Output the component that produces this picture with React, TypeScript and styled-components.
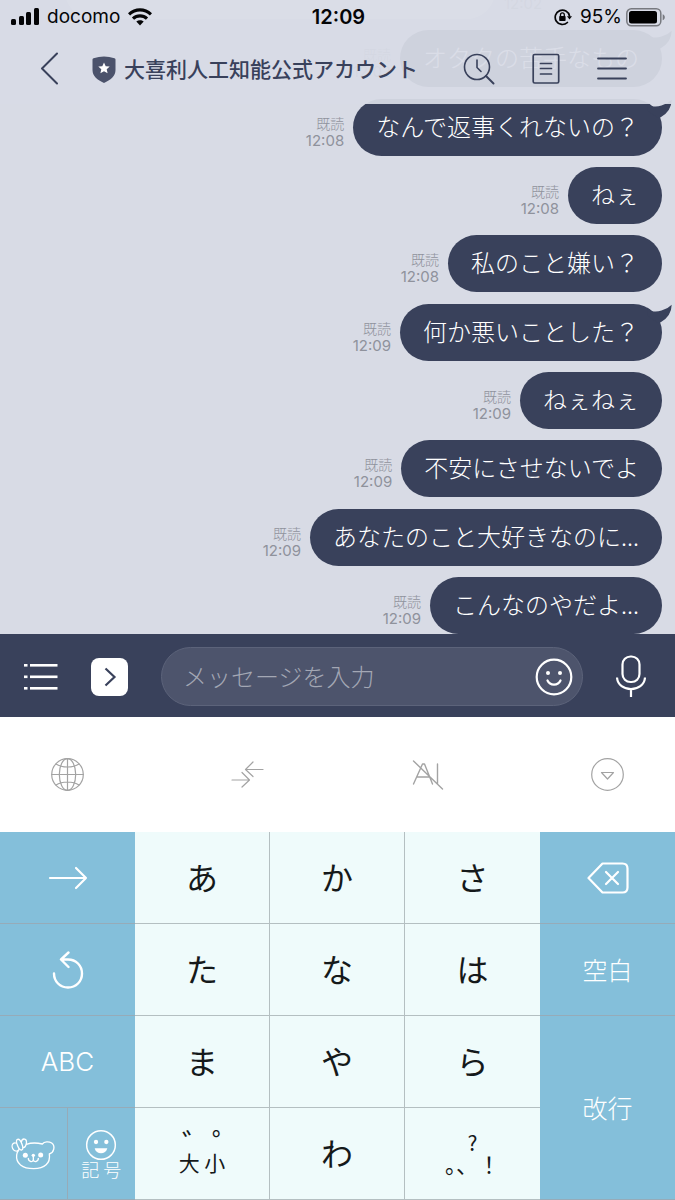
import React from "react";
import styled, { createGlobalStyle, css } from "styled-components";

const ink = "#39415b";
const chatBg = "#d8dbe5";
const keyBlue = "#84bfda";

const GlobalStyle = createGlobalStyle`
  *, *::before, *::after { box-sizing: border-box; }
  body { margin: 0; background: #fff; }
  body, button, input {
    font-family: Inter, "Noto Sans CJK JP", sans-serif;
  }
`;

const Page = styled.main`
  min-height: 100vh;
  display: flex;
  flex-direction: column;
`;

const IconButton = styled.button`
  display: flex;
  align-items: center;
  justify-content: center;
  padding: 0;
  border: 0;
  background: none;
  color: inherit;
  cursor: pointer;
`;

/* ---------- chat ---------- */

const Chat = styled.section`
  position: relative;
  flex: 1;
  display: flex;
  flex-direction: column;
  background: ${chatBg};
  overflow: hidden;
`;

const Header = styled.header`
  position: absolute;
  top: 0;
  left: 0;
  right: 0;
  z-index: 1;
  background: rgba(216, 219, 229, 0.94);
`;

const StatusBar = styled.div`
  display: grid;
  grid-template-columns: 1fr auto 1fr;
  align-items: center;
  height: 34px;
  padding: 0 9px 0 11px;
  font-size: 19px;
  line-height: 24px;
  color: #050507;
`;

const StatusGroup = styled.div<{ $end?: boolean }>`
  display: flex;
  align-items: center;
  justify-content: ${(p) => (p.$end ? "flex-end" : "flex-start")};
  gap: ${(p) => (p.$end ? "4px" : "8px")};
`;

const Lock = styled.span`
  display: flex;
  margin-right: 4px;
`;

const Clock = styled.time`
  font-size: 20px;
  font-weight: 600;
`;

const NavBar = styled.nav`
  display: flex;
  align-items: center;
  height: 70px;
  padding: 0 48px 0 40px;
  color: ${ink};
`;

const TitleGroup = styled.div`
  display: flex;
  align-items: center;
  flex: 1;
  gap: 8px;
  margin-left: 34px;
`;

const Title = styled.h1`
  margin: 0;
  padding-bottom: 3px;
  font-family: "Noto Sans CJK JP", sans-serif;
  font-size: 21px;
  font-weight: 500;
  line-height: 30px;
  white-space: nowrap;
`;

const NavActions = styled.div`
  display: flex;
  align-items: center;
  gap: 37px;
`;

const MessageList = styled.ol`
  flex: 1;
  display: flex;
  flex-direction: column;
  justify-content: space-between;
  gap: 11px;
  margin: -38px 0 0;
  padding: 0 13px;
  list-style: none;
`;

const MessageRow = styled.li<{ $incoming?: boolean }>`
  display: flex;
  align-items: flex-end;
  justify-content: ${(p) => (p.$incoming ? "flex-start" : "flex-end")};
  gap: 9px;
`;

const Bubble = styled.p<{ $incoming?: boolean }>`
  position: relative;
  margin: 0;
  min-height: 57px;
  padding: 8px 23px 12px;
  border-radius: 29px;
  background: ${(p) => (p.$incoming ? "#fff" : ink)};
  color: #fff;
  font-family: "Noto Sans CJK JP", sans-serif;
  font-size: 24px;
  font-weight: 300;
  line-height: 37px;
  ${(p) =>
    p.$incoming &&
    css`
      flex: 0 1 430px;
      margin-left: 52px;
    `}
`;

const Tail = styled.svg`
  position: absolute;
  top: 0;
  right: -10px;
`;

const Meta = styled.div`
  display: flex;
  flex-direction: column;
  align-items: flex-end;
  padding-bottom: 6px;
  color: #8f929c;
  font-size: 15px;
  line-height: 18px;
`;

const ReadMark = styled.span`
  font-family: "Noto Sans CJK JP", sans-serif;
  font-size: 14px;
  font-weight: 300;
`;

/* ---------- composer ---------- */

const Composer = styled.form`
  display: flex;
  align-items: center;
  height: 83px;
  padding: 2px 29px 0 24px;
  gap: 33px;
  background: ${ink};
  color: #fff;
`;

const ExpandButton = styled(IconButton)`
  width: 37px;
  height: 38px;
  border-radius: 8px;
  background: #fff;
  color: ${ink};
`;

const Field = styled.div`
  flex: 1;
  min-width: 0;
  display: flex;
  align-items: center;
  height: 59px;
  padding: 0 9px 0 21px;
  border: 1px solid #5c637a;
  border-radius: 30px;
  background: #4d546c;
`;

const FieldInput = styled.input`
  flex: 1;
  min-width: 0;
  padding: 0 0 2px;
  border: 0;
  outline: 0;
  background: none;
  color: #fff;
  font-family: "Noto Sans CJK JP", sans-serif;
  font-size: 24px;
  font-weight: 300;
  line-height: 36px;
  &::placeholder { color: #a3a7b4; opacity: 1; }
`;

/* ---------- keyboard ---------- */

const Toolbar = styled.div`
  display: flex;
  align-items: center;
  justify-content: space-between;
  height: 115px;
  padding: 0 51px;
  background: #fff;
  color: #a3a3a3;
`;

const Keyboard = styled.div`
  display: grid;
  grid-template-columns: repeat(5, 1fr);
  grid-auto-rows: 92px;
`;

const Key = styled.button<{ $accent?: boolean; $tall?: boolean; $line?: boolean }>`
  display: flex;
  flex-direction: column;
  align-items: center;
  justify-content: center;
  min-width: 0;
  padding: 0 0 ${(p) => (p.$accent ? "2px" : "4px")};
  border: 0 solid ${(p) => (p.$accent ? "#96abb8" : "#b4bfc1")};
  border-bottom-width: 1px;
  border-right-width: ${(p) => (p.$line ? "1px" : "0")};
  background: ${(p) => (p.$accent ? keyBlue : "#effbfb")};
  color: ${(p) => (p.$accent ? "#fff" : "#15191a")};
  font-family: "Noto Sans CJK JP", sans-serif;
  font-size: ${(p) => (p.$accent ? "25px" : "32px")};
  font-weight: ${(p) => (p.$accent ? 300 : 400)};
  line-height: 40px;
  cursor: pointer;
  ${(p) => p.$tall && css`grid-row: span 2;`}
`;

const IconKey = styled(Key)`
  padding: 0;
`;

const LatinLabel = styled.span`
  padding-top: 2px;
  font-family: Inter, sans-serif;
  font-size: 26px;
  font-weight: 300;
`;

const SplitKeys = styled.div`
  display: grid;
  grid-template-columns: 1fr 1fr;
`;

const SmallLabel = styled.span<{ $size: number; $height: number }>`
  font-size: ${(p) => p.$size}px;
  line-height: ${(p) => p.$height}px;
  white-space: pre;
`;

const VoicingMarks = styled(SmallLabel)`
  padding-left: 20px;
`;

/* ---------- drawings ---------- */

const line = {
  fill: "none",
  stroke: "currentColor",
  strokeLinecap: "round" as const,
  strokeLinejoin: "round" as const,
};

const SignalIcon = () => (
  <svg width="28" height="18" viewBox="0 0 28 18" fill="currentColor" aria-hidden="true">
    <rect x="0" y="11" width="5" height="6" rx="1.5" />
    <rect x="8" y="8" width="5" height="9" rx="1.5" />
    <rect x="15" y="4" width="5" height="13" rx="1.5" />
    <rect x="23" y="0" width="5" height="17" rx="1.5" />
  </svg>
);

const WifiIcon = () => (
  <svg width="24" height="18" viewBox="0 0 24 18" fill="none" stroke="currentColor" strokeWidth="3.2" aria-hidden="true">
    <path d="M1 6.4C7.3.4 16.7.4 23 6.4" />
    <path d="M5 10.7c4-3.7 10-3.7 14 0" />
    <path d="M8.3 13.6c2.2-1.9 5.2-1.9 7.4 0L12 17.4z" fill="currentColor" stroke="none" />
  </svg>
);

const LockIcon = () => (
  <svg width="18" height="18" viewBox="0 0 18 18" {...line} strokeWidth="1.7" aria-hidden="true">
    <path d="M13.4 14.5A7.2 7.2 0 1 1 15.5 8" />
    <path d="M13 8.200h5l-2.500 3.300z" fill="currentColor" stroke="none" />
    <rect x="5.2" y="8" width="6.4" height="5" rx=".8" fill="currentColor" stroke="none" />
    <path d="M6.500 8V6.800a1.900 1.900 0 0 1 3.800 0V8" strokeWidth="1.3" />
  </svg>
);

const BatteryIcon = () => (
  <svg width="40" height="19" viewBox="0 0 40 19" aria-hidden="true">
    <rect x=".8" y=".8" width="34" height="17" rx="4.5" fill="none" stroke="#77797f" strokeWidth="1.5" />
    <rect x="3" y="3" width="28" height="12.6" rx="2.5" fill="#000" />
    <path d="M36.7 6.300c2.800 1 2.800 5 0 6z" fill="#77797f" />
  </svg>
);

const BackIcon = () => (
  <svg width="18" height="34" viewBox="0 0 18 34" {...line} strokeWidth="2" aria-hidden="true">
    <path d="M17 1.500 2 16.500l15 15" />
  </svg>
);

const ShieldIcon = () => (
  <svg width="24" height="27" viewBox="0 0 24 27" aria-hidden="true">
    <path d="M.5 3.500Q.5 2.500 1.500 2.200Q12-1 22.500 2.200q1 .3 1 1.300V14c0 6-5 10-11.500 13C5.500 24 .5 20 .5 14z" fill="#4b526b" />
    <path d="m12 6.500 1.700 3.700 4 .4-3 2.700.9 4-3.600-2.100-3.600 2.100.9-4-3-2.700 4-.4z" fill="#fff" />
  </svg>
);

const SearchHistoryIcon = () => (
  <svg width="32" height="32" viewBox="0 0 32 32" {...line} strokeWidth="1.6" aria-hidden="true">
    <circle cx="14" cy="14" r="12.5" />
    <path d="m23 23 7.500 7.500" strokeWidth="2" />
    <path d="M14 7v7.500l4 4" />
  </svg>
);

const NoteIcon = () => (
  <svg width="28" height="32" viewBox="0 0 28 32" {...line} strokeWidth="1.7" aria-hidden="true">
    <rect x="1.2" y="1.5" width="25.5" height="28.5" rx="1.5" />
    <path d="M8.500 10.500h11M8.500 15.500h11M8.500 21h11" />
  </svg>
);

const MenuIcon = () => (
  <svg width="30" height="26" viewBox="0 0 30 26" {...line} strokeWidth="1.8" aria-hidden="true">
    <path d="M1 2.500h28M1 12.500h28M1 22.500h28" />
  </svg>
);

const BubbleTail = () => (
  <Tail width="26" height="20" viewBox="0 0 26 20" fill={ink} aria-hidden="true">
    <path d="M1 3.500L5.500 7Q10 8.300 15.500 6.600Q21.500 5 25.700 .700Q25.500 12 14.700 18.300L12 19L2 12z" />
  </Tail>
);

const ListIcon = () => (
  <svg width="34" height="28" viewBox="0 0 34 28" fill="currentColor" aria-hidden="true">
    {[1, 12.5, 24].map((y) => (
      <g key={y}>
        <rect x="0" y={y} width="3.5" height="2.6" />
        <rect x="6" y={y} width="27.5" height="2.6" />
      </g>
    ))}
  </svg>
);

const ChevronIcon = () => (
  <svg width="14" height="22" viewBox="0 0 14 22" fill="none" stroke="currentColor" strokeWidth="2.2" aria-hidden="true">
    <path d="m2.500 2.500 9 8.500-9 8.500" />
  </svg>
);

const SmileIcon = () => (
  <svg width="38" height="38" viewBox="0 0 38 38" {...line} strokeWidth="2.2" aria-hidden="true">
    <circle cx="19" cy="19" r="17.3" />
    <circle cx="13" cy="15" r="2" fill="currentColor" stroke="none" />
    <circle cx="25" cy="15" r="2" fill="currentColor" stroke="none" />
    <path d="M12.500 22.500c2.500 5.500 10.500 5.500 13 0" />
  </svg>
);

const MicIcon = () => (
  <svg width="30" height="44" viewBox="0 0 30 44" {...line} strokeWidth="2.2" aria-hidden="true">
    <rect x="6.5" y="1.5" width="17" height="25.500" rx="8" />
    <path d="M1 22.500C2 38 28 38 29 22.500M15 34v8" strokeLinecap="butt" />
  </svg>
);

const GlobeIcon = () => (
  <svg width="33" height="33" viewBox="0 0 33 33" {...line} strokeWidth="1.2" aria-hidden="true">
    <circle cx="16.5" cy="16.5" r="15.8" />
    <ellipse cx="16.5" cy="16.5" rx="8.2" ry="15.8" />
    <path d="M16.500.7v31.600M.7 16.500h31.600M5 6c6 4 17 4 23 0M5 27c6-4 17-4 23 0" />
  </svg>
);

const ArrowsIcon = () => (
  <svg width="33" height="28" viewBox="0 0 33 28" {...line} strokeWidth="1.2" aria-hidden="true">
    <path d="M32 8.500H15M22 1 14.500 8.500l7.500 7" />
    <path d="M1 19h17M11 11.500l7.500 7.500L11 26" />
  </svg>
);

const NoAiIcon = () => (
  <svg width="33" height="32" viewBox="0 0 33 32" {...line} strokeWidth="1.4" aria-hidden="true">
    <path d="m2.500 25 9-20h2l8 20M6 18h12.500M26.500 5v20M2.500 2l29 28" />
  </svg>
);

const CollapseIcon = () => (
  <svg width="33" height="33" viewBox="0 0 33 33" {...line} strokeWidth="1.2" aria-hidden="true">
    <circle cx="16.5" cy="16.5" r="15.8" />
    <path d="M10.500 14.500h12l-6 6.500z" />
  </svg>
);

const ArrowRightIcon = () => (
  <svg width="40" height="24" viewBox="0 0 40 24" {...line} strokeWidth="2.2" aria-hidden="true">
    <path d="M2 12h36M28 2l10 10-10 10" />
  </svg>
);

const UndoIcon = () => (
  <svg width="32" height="38" viewBox="0 0 32 38" {...line} strokeWidth="2.4" aria-hidden="true">
    <path d="M2 22.500C2 30.500 8 36.500 16 36.500S30 30.500 30 22.500 24 8.500 16 8.500H9.500M16.500 1.500 9 8.500l7.500 7.500" />
  </svg>
);

const DeleteIcon = () => (
  <svg width="42" height="32" viewBox="0 0 42 32" {...line} strokeWidth="2.2" aria-hidden="true">
    <path d="M15.500 1.500H35.500Q40.500 1.500 40.500 6.500V25.500Q40.500 30.500 35.500 30.500H15.500L1.500 16z" />
    <path d="m19 10 12 12M31 10 19 22" />
  </svg>
);

const BearIcon = () => (
  <svg width="46" height="36" viewBox="31 380 138 108" {...line} strokeWidth="4" aria-hidden="true">
    <path d="M80 405C94 400 112 400 128 404C134 396 148 396 156 401C168 410 163 430 149 434C153 462 135 478 102 478C68 478 48 462 51 437C52 430 54 426 57 422" />
    <g fill={keyBlue}>
      <ellipse cx="48" cy="413" rx="10" ry="13" transform="rotate(-25 48 413)" />
      <ellipse cx="72" cy="402" rx="8" ry="13" transform="rotate(12 72 402)" />
      <ellipse cx="60" cy="406" rx="7" ry="17" transform="rotate(-22 60 406)" />
    </g>
    <circle cx="77" cy="438" r="7.5" fill="currentColor" stroke="none" />
    <circle cx="123" cy="437" r="7.5" fill="currentColor" stroke="none" />
    <circle cx="101" cy="438" r="5" fill="currentColor" stroke="none" />
    <path d="M101 440v10M86 447c0 11 14 13 15 4c1 9 15 7 15-4" />
  </svg>
);

const GrinIcon = () => (
  <svg width="32" height="32" viewBox="255 359 96 96" {...line} strokeWidth="4.5" aria-hidden="true">
    <circle cx="303" cy="407" r="43" />
    <circle cx="288" cy="398" r="6.5" fill="currentColor" stroke="none" />
    <circle cx="319" cy="398" r="6.5" fill="currentColor" stroke="none" />
    <path d="M284 417h38c-4 20-34 20-38 0z" fill="currentColor" stroke="none" />
  </svg>
);

/* ---------- data ---------- */

type Message = { text: string; time: string; tail?: boolean };

const messages: Message[] = [
  { text: "オタクの苦手なもの", time: "12:02", tail: true },
  { text: "なんで返事くれないの？", time: "12:08", tail: true },
  { text: "ねぇ", time: "12:08" },
  { text: "私のこと嫌い？", time: "12:08" },
  { text: "何か悪いことした？", time: "12:09", tail: true },
  { text: "ねぇねぇ", time: "12:09" },
  { text: "不安にさせないでよ", time: "12:09" },
  { text: "あなたのこと大好きなのに...", time: "12:09" },
  { text: "こんなのやだよ...", time: "12:09" },
];

const KanaKeys = ({ keys }: { keys: string[] }) => (
  <>
    {keys.map((k, i) => (
      <Key key={k} type="button" $line={i < keys.length - 1 || keys.length === 1}>
        {k}
      </Key>
    ))}
  </>
);

export default function App() {
  return (
    <Page lang="ja">
      <GlobalStyle />
      <Chat>
        <Header>
          <StatusBar>
            <StatusGroup>
              <SignalIcon />
              <span>docomo</span>
              <WifiIcon />
            </StatusGroup>
            <Clock>12:09</Clock>
            <StatusGroup $end>
              <Lock><LockIcon /></Lock>
              <span>95%</span>
              <BatteryIcon />
            </StatusGroup>
          </StatusBar>
          <NavBar>
            <IconButton type="button" aria-label="戻る"><BackIcon /></IconButton>
            <TitleGroup>
              <ShieldIcon />
              <Title>大喜利人工知能公式アカウント</Title>
            </TitleGroup>
            <NavActions>
              <IconButton type="button" aria-label="検索"><SearchHistoryIcon /></IconButton>
              <IconButton type="button" aria-label="ノート"><NoteIcon /></IconButton>
              <IconButton type="button" aria-label="メニュー"><MenuIcon /></IconButton>
            </NavActions>
          </NavBar>
        </Header>
        <MessageList>
          <MessageRow $incoming>
            <Bubble $incoming />
            <Meta><span>12:02</span></Meta>
          </MessageRow>
          {messages.map((m) => (
            <MessageRow key={m.text}>
              <Meta>
                <ReadMark>既読</ReadMark>
                <span>{m.time}</span>
              </Meta>
              <Bubble>
                {m.text}
                {m.tail && <BubbleTail />}
              </Bubble>
            </MessageRow>
          ))}
        </MessageList>
      </Chat>

      <Composer onSubmit={(e) => e.preventDefault()}>
        <IconButton type="button" aria-label="リスト"><ListIcon /></IconButton>
        <ExpandButton type="button" aria-label="開く"><ChevronIcon /></ExpandButton>
        <Field>
          <FieldInput type="text" placeholder="メッセージを入力" aria-label="メッセージを入力" />
          <IconButton type="button" aria-label="スタンプ"><SmileIcon /></IconButton>
        </Field>
        <IconButton type="button" aria-label="音声"><MicIcon /></IconButton>
      </Composer>

      <Toolbar>
        <IconButton type="button" aria-label="言語"><GlobeIcon /></IconButton>
        <IconButton type="button" aria-label="幅を縮小"><ArrowsIcon /></IconButton>
        <IconButton type="button" aria-label="AIオフ"><NoAiIcon /></IconButton>
        <IconButton type="button" aria-label="閉じる"><CollapseIcon /></IconButton>
      </Toolbar>

      <Keyboard>
        <IconKey type="button" $accent aria-label="次へ"><ArrowRightIcon /></IconKey>
        <KanaKeys keys={["あ", "か", "さ"]} />
        <IconKey type="button" $accent aria-label="削除"><DeleteIcon /></IconKey>

        <IconKey type="button" $accent aria-label="元に戻す"><UndoIcon /></IconKey>
        <KanaKeys keys={["た", "な", "は"]} />
        <Key type="button" $accent>空白</Key>

        <Key type="button" $accent><LatinLabel>ABC</LatinLabel></Key>
        <KanaKeys keys={["ま", "や", "ら"]} />
        <Key type="button" $accent $tall>改行</Key>

        <SplitKeys>
          <IconKey type="button" $accent $line aria-label="着せかえ"><BearIcon /></IconKey>
          <Key type="button" $accent>
            <GrinIcon />
            <SmallLabel $size={18} $height={16}>記 号</SmallLabel>
          </Key>
        </SplitKeys>
        <Key type="button" $line>
          <VoicingMarks $size={30} $height={20}>゛゜</VoicingMarks>
          <SmallLabel $size={21} $height={20}>大 小</SmallLabel>
        </Key>
        <KanaKeys keys={["わ"]} />
        <Key type="button">
          <SmallLabel $size={21} $height={22}>?</SmallLabel>
          <SmallLabel $size={22} $height={20}>。、！</SmallLabel>
        </Key>
      </Keyboard>
    </Page>
  );
}
